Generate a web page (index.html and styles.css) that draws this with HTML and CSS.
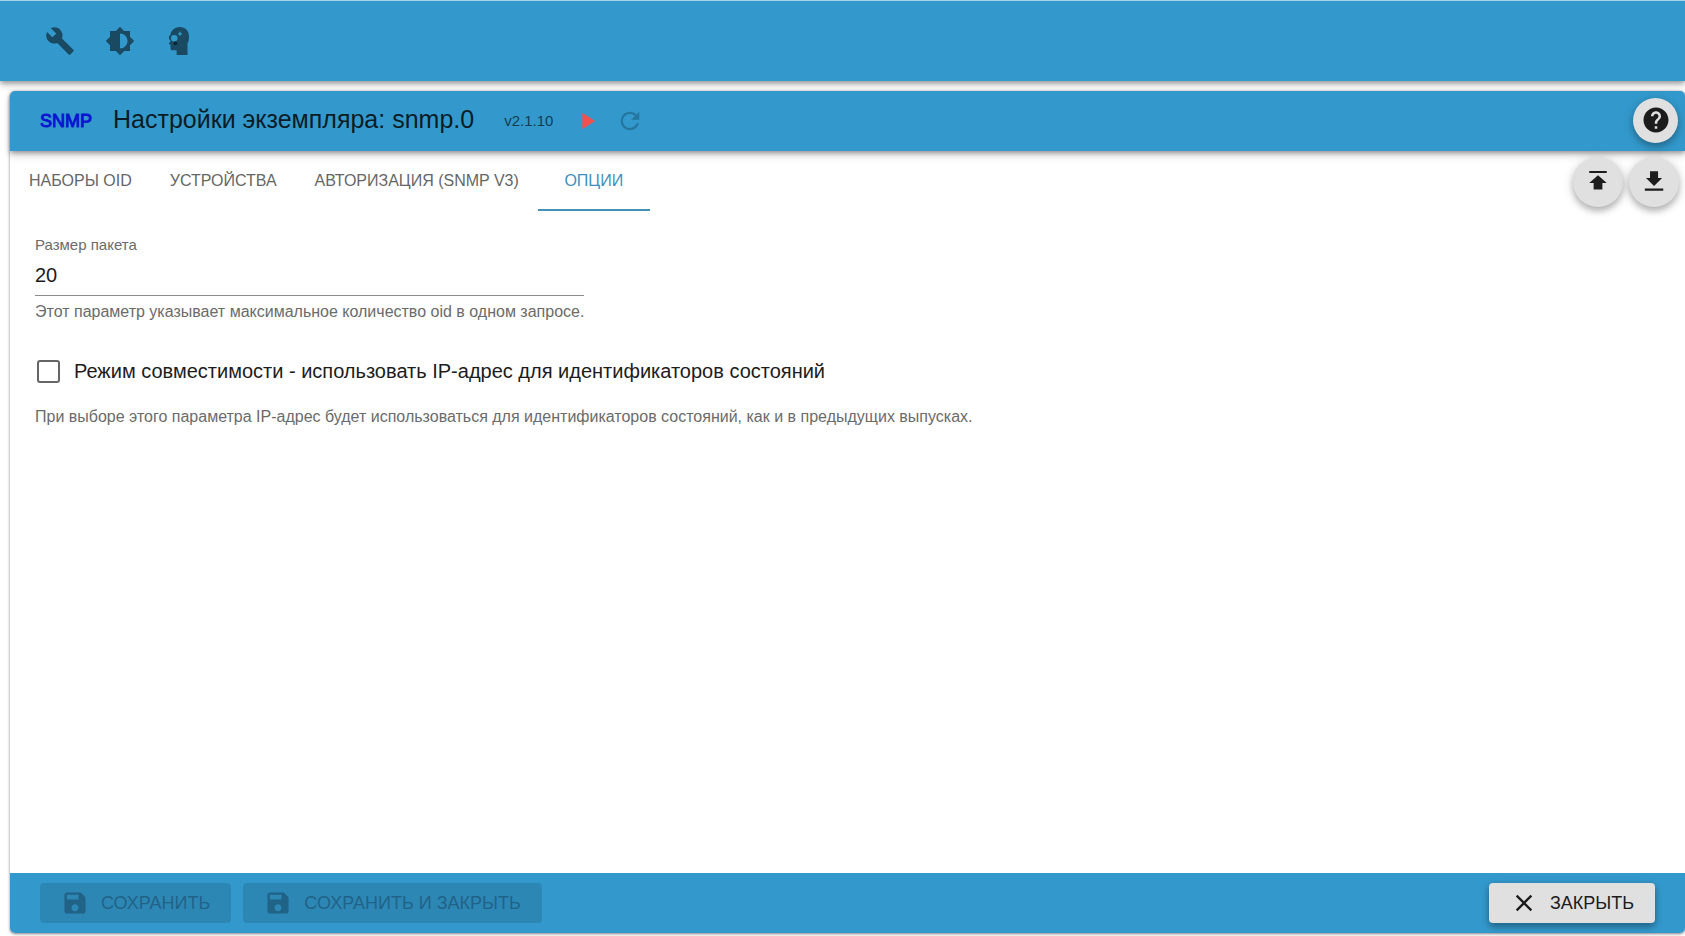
FILE: index.html
```html
<!DOCTYPE html>
<html lang="ru">
<head>
<meta charset="utf-8">
<title>Настройки экземпляра: snmp.0</title>
<link rel="stylesheet" href="styles.css">
</head>
<body>
<header class="topbar">
  <button class="icon-btn" type="button" aria-label="Системные настройки"><svg class="icon" viewBox="0 0 24 24"><path d="M22.7 19l-9.1-9.1c.9-2.3.4-5-1.5-6.9-2-2-5-2.4-7.4-1.3L9 6 6 9 1.6 4.7C.4 7.1.9 10.1 2.9 12.1c1.9 1.9 4.6 2.4 6.9 1.5l9.1 9.1c.4.4 1 .4 1.4 0l2.3-2.3c.5-.4.5-1.1.1-1.4z"/></svg></button>
  <button class="icon-btn" type="button" aria-label="Тема"><svg class="icon" viewBox="0 0 24 24"><path d="M20 15.31L23.31 12 20 8.69V4h-4.69L12 .69 8.69 4H4v4.69L.69 12 4 15.31V20h4.69L12 23.31 15.31 20H20v-4.69zM12 18V6c3.31 0 6 2.69 6 6s-2.69 6-6 6z"/></svg></button>
  <button class="icon-btn" type="button" aria-label="Режим эксперта"><svg class="icon" viewBox="0 0 24 24"><path fill-rule="evenodd" d="M12 .8C7.900.8 5 3.300 4.300 7L3.200 8.300v2.300l1.300.9-1.500 2.900 1.400.5v3c0 1 .7 1.500 1.700 1.500h3.200v3.700H18V14c.8-1.600 1.200-3.500 1.200-5.500C19.200 4 16.300.8 12 .8zM7.400 7.100a2.600 2.600 0 1 1 0 5.200 2.600 2.600 0 0 1 0-5.200zM10.400 5.700h1.100V4.600h1v1.100h1.100v1h-1.100v1.100h-1V6.700h-1.100z"/><circle cx="8.300" cy="13.800" r="1.500" fill="#0b2535"/></svg></button>
</header>

<main class="panel">
  <div class="panel-head">
    <span class="logo">SNMP</span>
    <h1 class="title">Настройки экземпляра: snmp.0</h1>
    <span class="version">v2.1.10</span>
    <button class="head-btn start" type="button" aria-label="Запустить"><svg class="icon-md" viewBox="0 0 24 24"><path d="M8 5v14l11-7z"/></svg></button>
    <button class="head-btn reload" type="button" aria-label="Перезапустить" disabled><svg class="icon-md" viewBox="0 0 24 24"><path d="M17.650 6.350C16.200 4.900 14.210 4 12 4c-4.420 0-7.990 3.580-7.990 8s3.570 8 7.990 8c3.730 0 6.840-2.550 7.730-6h-2.080c-.82 2.330-3.040 4-5.650 4-3.310 0-6-2.690-6-6s2.690-6 6-6c1.660 0 3.140.69 4.220 1.780L13 11h7V4l-2.350 2.350z"/></svg></button>
    <button class="fab fab-help" type="button" aria-label="Помощь"><svg class="icon" viewBox="0 0 24 24"><path d="M12 2C6.480 2 2 6.480 2 12s4.480 10 10 10 10-4.480 10-10S17.520 2 12 2zm1 17h-2v-2h2v2zm2.070-7.750l-.9.920C13.450 12.900 13 13.500 13 15h-2v-.5c0-1.100.45-2.100 1.170-2.830l1.240-1.260c.37-.36.59-.86.59-1.410 0-1.100-.9-2-2-2s-2 .9-2 2H8c0-2.210 1.790-4 4-4s4 1.790 4 4c0 .88-.36 1.680-.93 2.250z"/></svg></button>
  </div>

  <div class="tab-row">
    <nav class="tabs" role="tablist">
      <button class="tab" type="button" role="tab">НАБОРЫ OID</button>
      <button class="tab" type="button" role="tab">УСТРОЙСТВА</button>
      <button class="tab" type="button" role="tab">АВТОРИЗАЦИЯ (SNMP V3)</button>
      <button class="tab active" type="button" role="tab" aria-selected="true">ОПЦИИ</button>
    </nav>
    <div class="file-actions">
      <button class="fab" type="button" aria-label="Загрузить из файла"><svg class="icon" viewBox="0 0 24 24"><path d="M4 3v2h16V3H4zm0 11h4v6h8v-6h4l-8-7-8 7z" transform="translate(1.500 .5) scale(.875)"/></svg></button>
      <button class="fab" type="button" aria-label="Сохранить в файл"><svg class="icon" viewBox="0 0 24 24"><path d="M19 8.500h-3.500V2.500h-7v6H5l7 7 7-7zM4 17.500v2h16v-2H4z" transform="translate(1 1) scale(.92)"/></svg></button>
    </div>
  </div>

  <section class="content">
    <div class="field">
      <label class="field-label" for="packet">Размер пакета</label>
      <input class="field-input" id="packet" type="text" value="20" aria-describedby="packet-help">
      <p class="help" id="packet-help">Этот параметр указывает максимальное количество oid в одном запросе.</p>
    </div>
    <label class="check"><input class="check-box" type="checkbox" aria-describedby="compat-help"><span>Режим совместимости - использовать IP-адрес для идентификаторов состояний</span></label>
    <p class="help" id="compat-help">При выборе этого параметра IP-адрес будет использоваться для идентификаторов состояний, как и в предыдущих выпусках.</p>
  </section>

  <footer class="panel-foot">
    <button class="btn" type="button" disabled><svg class="icon-md" viewBox="0 0 24 24"><path d="M17 3H5c-1.110 0-2 .9-2 2v14c0 1.100.89 2 2 2h14c1.100 0 2-.9 2-2V7l-4-4zm-5 16c-1.660 0-3-1.340-3-3s1.340-3 3-3 3 1.340 3 3-1.340 3-3 3zm3-10H5V5h10v4z"/></svg>СОХРАНИТЬ</button>
    <button class="btn" type="button" disabled><svg class="icon-md" viewBox="0 0 24 24"><path d="M17 3H5c-1.110 0-2 .9-2 2v14c0 1.100.89 2 2 2h14c1.100 0 2-.9 2-2V7l-4-4zm-5 16c-1.660 0-3-1.340-3-3s1.340-3 3-3 3 1.340 3 3-1.340 3-3 3zm3-10H5V5h10v4z"/></svg>СОХРАНИТЬ И ЗАКРЫТЬ</button>
    <button class="btn btn-close" type="button"><svg class="icon-md" viewBox="0 0 24 24"><path d="M19 6.410L17.590 5 12 10.590 6.410 5 5 6.410 10.590 12 5 17.590 6.410 19 12 13.410 17.590 19 19 17.590 13.410 12z"/></svg>ЗАКРЫТЬ</button>
  </footer>
</main>
</body>
</html>
```
FILE: styles.css
```css
* { box-sizing: border-box; }
body {
  margin: 0;
  min-height: 100vh;
  padding-bottom: 3px;
  display: flex;
  flex-direction: column;
  gap: 10px;
  background: #fff;
  color: #1c1f21;
  font-family: Arial, "Liberation Sans", sans-serif;
  font-size: 16px;
}
button {
  font: inherit;
  color: inherit;
  background: none;
  border: 0;
  padding: 0;
  display: flex;
  align-items: center;
  justify-content: center;
}
svg { fill: currentColor; display: block; flex: none; }
.icon { width: 30px; height: 30px; }
.icon-md { width: 28px; height: 28px; }

.topbar {
  height: 81px;
  padding-left: 30px;
  display: flex;
  align-items: center;
  background: #3399cc;
  border-top: 1px solid #a9d3ea;
  box-shadow: 0 2px 5px rgba(0, 0, 0, .35), 0 5px 8px rgba(0, 0, 0, .12);
}
.icon-btn { width: 60px; height: 60px; color: #1a4a62; }

.panel {
  flex: 1;
  margin-left: 10px;
  display: flex;
  flex-direction: column;
  border-radius: 5px;
  background: #fff;
  box-shadow: 0 1px 3px rgba(0, 0, 0, .5);
}
.panel-head {
  height: 60px;
  padding: 0 7px 2px 30px;
  display: flex;
  align-items: center;
  background: #3399cc;
  border-radius: 5px 5px 0 0;
  box-shadow: 0 2px 5px rgba(0, 0, 0, .35), 0 5px 8px rgba(0, 0, 0, .12);
}
.logo { color: #0a14d2; font-size: 18px; line-height: 20px; padding-top: 2px; -webkit-text-stroke: 1px #0a14d2; }
.title { margin: 0 30px 0 21px; font-size: 25px; line-height: 32px; padding-bottom: 2px; font-weight: 400; color: #0c1c25; }
.version { font-size: 15px; line-height: 20px; padding-top: 2px; color: #143d52; margin-right: 20px; }
.head-btn { width: 28px; height: 30px; padding-top: 2px; }
.start { color: #f05050; margin-right: 15px; }
.reload { color: #2677a0; }

.fab {
  width: 50px;
  height: 50px;
  border-radius: 50%;
  background: #e0e0e0;
  color: #1c1c1c;
  box-shadow: 0 4px 6px rgba(0, 0, 0, .22), 0 2px 12px rgba(0, 0, 0, .16);
}
.fab-help { width: 45px; height: 45px; margin-left: auto; }

.tab-row { display: flex; justify-content: space-between; align-items: flex-start; padding-right: 6px; }
.tabs { display: flex; }
.tab {
  height: 60px;
  min-width: 112px;
  padding: 0 19px;
  color: #666;
}
.tab.active { color: #3f8fbd; box-shadow: inset 0 -2px #4590b5; }
.file-actions { display: flex; gap: 6px; padding-top: 6px; }

.content { flex: 1; padding: 24px 25px; display: flex; flex-direction: column; align-items: flex-start; }
.field { display: flex; flex-direction: column; }
.field-label { font-size: 15px; line-height: 20px; color: #6b6b6b; }
.field-input {
  width: 100%;
  height: 41px;
  padding: 0;
  border: 0;
  border-bottom: 1px solid #8c8c8c;
  background: none;
  font: inherit;
  font-size: 20px;
  color: #1c1c1c;
}
.help { margin: 0; font-size: 16px; line-height: 20px; color: #6b6b6b; }
.field .help { margin-top: 6px; }
.check { display: flex; align-items: center; gap: 14px; margin: 29px 0 16px; padding-left: 2px; font-size: 20px; line-height: 40px; color: #1c1c1c; }
.check-box {
  appearance: none;
  width: 23px;
  height: 23px;
  margin: 0;
  border: 2px solid #666;
  border-radius: 3px;
}

.panel-foot {
  height: 60px;
  padding: 0 30px;
  display: flex;
  align-items: center;
  gap: 12px;
  background: #3399cc;
  border-radius: 0 0 5px 5px;
}
.btn {
  height: 40px;
  padding: 0 21px;
  gap: 12px;
  border-radius: 4px;
  font-size: 18px;
  background: #2d87b5;
  color: #216387;
}
.btn-close {
  margin-left: auto;
  background: #e0e0e0;
  color: #1c1c1c;
  box-shadow: 0 4px 6px rgba(0, 0, 0, .22), 0 2px 10px rgba(0, 0, 0, .2);
}
```
